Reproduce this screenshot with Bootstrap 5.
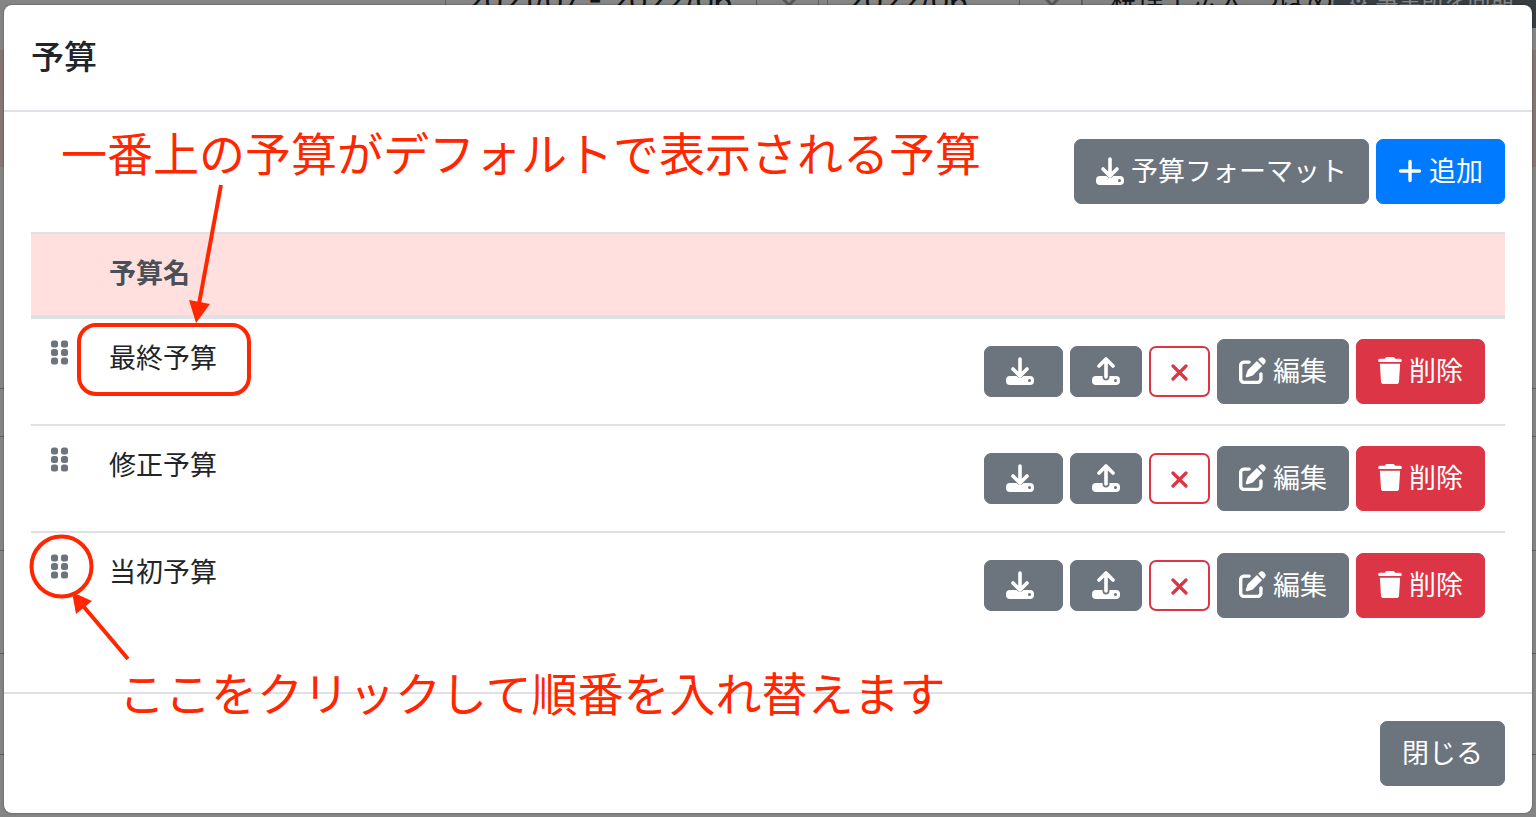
<!DOCTYPE html>
<html lang="ja">
<head>
<meta charset="utf-8">
<meta name="viewport" content="width=device-width, initial-scale=1">
<title>予算</title>
<link href="https://cdn.jsdelivr.net/npm/bootstrap@5.3.0/dist/css/bootstrap.min.css" rel="stylesheet">
<style>
  body { font-family: "Noto Sans CJK JP", sans-serif; font-size: 27px; line-height: 41px; color: #212529; background: #fff; }
  .stage { min-height: 100vh; padding: 5px 4px 4px; }

  /* page under the dialog */
  .underlay { inset: 0; line-height: 40px; }
  .underlay::after { content: ""; position: absolute; inset: 0; background: rgba(0,0,0,.48); }
  .filter-bar { height: 50px; padding-left: 445px; }
  .filter-bar > div { height: 10px; border: solid #bbb; border-width: 0 1px 1px; }
  .filter-text { margin-top: -19px; white-space: nowrap; font-family: Inter, "Noto Sans CJK JP", sans-serif; font-size: 30px; }
  .period { width: 374px; padding-left: 20px; }
  .month { width: 255px; padding-left: 18px; margin-left: 8px; }
  .office { width: 252px; padding-left: 27px; background: #f5f7f6; }
  .office .filter-text { font-size: 27px; }
  .filter-bar > .sync { height: 28px; background: #6c757d; border: 0; color: #fff; padding-left: 14px; }
  .sync .filter-text { font-size: 23px; }
  .chev { width: 62px; border-left: 1px solid #aaa; padding-left: 20px; }
  .band-pink { height: 117px; background: #ffe0de; }
  .line-row { border-bottom: 1px solid #b4b8bb; }

  /* dialog */
  .budget-dialog { background: #fff; border-radius: 8px; border: 0; box-shadow: 0 0 2px rgba(0,0,0,.5); }
  .budget-dialog .modal-header { padding: 25px 27px 29px; border-bottom: 2px solid #dee2e6; }
  .budget-dialog .modal-title { font-size: 33px; line-height: 51px; font-weight: 500; }
  .budget-dialog .modal-body { padding: 27px; }
  .budget-dialog .modal-footer { padding: 27px; border-top: 2px solid #dee2e6; }
  .budget-dialog .modal-footer > * { margin: 0; }
  .toolbar { gap: 7px; margin-bottom: 28px; }

  .act { --bs-btn-font-size: 27px; --bs-btn-line-height: 41px; --bs-btn-border-radius: 7px;
         padding: 9px 21px 13px;
         display: inline-flex; align-items: center; gap: 7px; white-space: nowrap; }
  .act.btn-secondary { --bs-btn-bg: #6c757d; }
  .act.btn-primary { --bs-btn-bg: #007bff; --bs-btn-border-color: #007bff; }
  .act svg, .grip svg { display: block; fill: currentColor; flex: none; }
  .act svg { margin-top: 2px; }
  .act-icon { height: 51px; }
  .act-wide { padding-right: 28px; }
  .act-clear { background: #fff; border-width: 2px; padding: 0 20px; }

  .budget-table { border-collapse: separate; border-spacing: 0; margin-bottom: 27px; }
  .budget-table > :not(caption) > * > * { padding: 20px; border: 0; }
  .budget-table > thead > tr > th { background: #ffe0de; color: #495057; border-top: 2px solid #dee2e6; border-bottom: 4px solid #dee2e6; }
  .budget-table > tbody > tr + tr > td { border-top: 2px solid #dee2e6; }
  .budget-table > tbody > tr > .name-cell { color: #212529; }
  .budget-table > thead > tr > th, .budget-table > tbody > tr > .name-cell { padding: 17px 20px 23px; }
  .grip-col { width: 58px; }
  .grip { border: 0; background: none; padding: 0; color: #6c757d; display: block; }
  .row-actions { gap: 7px; }

  /* red notes over the dialog */
  .notes { inset: 0; pointer-events: none; color: #ff2600; }
  .note { font-size: 46px; line-height: 60px; white-space: nowrap; }
  .note-top { left: 61px; top: 121px; }
  .note-bottom { left: 119px; top: 661px; }
</style>
</head>
<body>
<svg class="d-none" aria-hidden="true">
  <symbol id="i-down" viewBox="0 0 28 28"><path d="M4 19h6.500q3.500 4 7 0H24a4 4 0 0 1 4 4v1a4 4 0 0 1-4 4H4a4 4 0 0 1-4-4v-1a4 4 0 0 1 4-4zM23.500 22a1.500 1.500 0 1 0 0 3 1.500 1.500 0 0 0 0-3z" fill-rule="evenodd"/><path d="M14 2v16M7 12l7 7 7-7" fill="none" stroke="currentColor" stroke-width="3.600" stroke-linecap="round" stroke-linejoin="round"/></symbol>
  <symbol id="i-up" viewBox="0 0 28 28"><path d="M4 19h6.500v1a3.500 3.500 0 0 0 7 0v-1H24a4 4 0 0 1 4 4v1a4 4 0 0 1-4 4H4a4 4 0 0 1-4-4v-1a4 4 0 0 1 4-4zM23.500 22a1.500 1.500 0 1 0 0 3 1.500 1.500 0 0 0 0-3z" fill-rule="evenodd"/><path d="M14 20V3M7 9l7-7 7 7" fill="none" stroke="currentColor" stroke-width="3.600" stroke-linecap="round" stroke-linejoin="round"/></symbol>
  <symbol id="i-x" viewBox="0 0 17 17"><path d="M2 2l13 13M15 2L2 15" stroke="currentColor" stroke-width="3.200" stroke-linecap="round"/></symbol>
  <symbol id="i-plus" viewBox="0 0 24 24"><path d="M12 2.500v19M2.500 12h19" stroke="currentColor" stroke-width="3.400" stroke-linecap="round"/></symbol>
  <symbol id="i-edit" viewBox="0 0 512 512"><path d="M471.6 21.7c-21.9-21.9-57.3-21.9-79.2 0L362.3 51.7l97.9 97.9 30.1-30.1c21.9-21.9 21.9-57.3 0-79.2L471.6 21.7zm-299.2 220c-6.1 6.1-10.8 13.6-13.5 21.9l-29.6 88.8c-2.9 8.6-.6 18.1 5.8 24.6s15.9 8.7 24.6 5.8l88.8-29.6c8.2-2.7 15.7-7.4 21.9-13.5L437.7 172.3 339.7 74.3 172.4 241.7zM96 64C43 64 0 107 0 160V416c0 53 43 96 96 96H352c53 0 96-43 96-96V320c0-17.7-14.3-32-32-32s-32 14.3-32 32v96c0 17.7-14.3 32-32 32H96c-17.7 0-32-14.3-32-32V160c0-17.7 14.3-32 32-32h96c17.7 0 32-14.3 32-32s-14.3-32-32-32H96z"/></symbol>
  <symbol id="i-trash" viewBox="0 0 448 512"><path d="M135.2 17.7L128 32H32C14.3 32 0 46.3 0 64S14.3 96 32 96H416c17.7 0 32-14.3 32-32s-14.3-32-32-32H320l-7.2-14.3C307.4 6.800 296.3 0 284.2 0H163.8c-12.1 0-23.2 6.800-28.6 17.7zM416 128H32L53.2 467c1.600 25.3 22.6 45 47.9 45H346.9c25.3 0 46.3-19.7 47.9-45L416 128z"/></symbol>
  <symbol id="i-grip" viewBox="0 0 17 27"><rect y="1.500" width="7" height="7" rx="2.500"/><rect x="10" y="1.500" width="7" height="7" rx="2.500"/><rect y="10" width="7" height="7" rx="2.500"/><rect x="10" y="10" width="7" height="7" rx="2.500"/><rect y="18.500" width="7" height="7" rx="2.500"/><rect x="10" y="18.500" width="7" height="7" rx="2.500"/></symbol>
</svg>

<div class="stage position-relative overflow-hidden">
  <div class="underlay position-absolute overflow-hidden d-flex flex-column" aria-hidden="true">
    <div class="filter-bar d-flex align-items-start flex-shrink-0">
      <div class="period d-flex justify-content-between flex-shrink-0"><span class="filter-text">2021/07 - 2022/06</span>
        <span class="chev"><svg class="d-block" width="24" height="8" viewBox="0 0 24 8"><path d="M3 -4l9 9 9-9" fill="none" stroke="#aaa" stroke-width="3"/></svg></span></div>
      <div class="month d-flex justify-content-between flex-shrink-0"><span class="filter-text">2022/06</span>
        <span class="chev"><svg class="d-block" width="24" height="8" viewBox="0 0 24 8"><path d="M3 -4l9 9 9-9" fill="none" stroke="#aaa" stroke-width="3"/></svg></span></div>
      <div class="office flex-shrink-0"><div class="filter-text">税理士法人 つばめ</div></div>
      <div class="sync flex-grow-1"><div class="filter-text">⚙ 事業所を同期</div></div>
    </div>
    <div class="band-pink flex-shrink-0"></div>
    <div class="line-row flex-shrink-0" style="height:222px"></div>
    <div class="line-row flex-shrink-0" style="height:48px"></div>
    <div class="line-row flex-shrink-0" style="height:114px"></div>
    <div class="line-row flex-shrink-0" style="height:103px"></div>
    <div class="line-row flex-shrink-0" style="height:101px"></div>
  </div>

  <div class="modal-content budget-dialog" role="dialog" aria-labelledby="dlg-title">
    <div class="modal-header"><h5 class="modal-title" id="dlg-title">予算</h5></div>
    <div class="modal-body">
      <div class="toolbar d-flex justify-content-end">
        <button type="button" class="btn btn-secondary act"><svg width="28" height="28"><use href="#i-down"/></svg>予算フォーマット</button>
        <button type="button" class="btn btn-primary act"><svg width="24" height="24"><use href="#i-plus"/></svg>追加</button>
      </div>
      <table class="table budget-table">
        <thead><tr><th class="grip-col"></th><th>予算名</th><th></th></tr></thead>
        <tbody>
          <tr>
            <td><button type="button" class="grip" aria-label="並べ替え"><svg width="17" height="27"><use href="#i-grip"/></svg></button></td>
            <td class="name-cell">最終予算</td>
            <td><div class="row-actions d-flex justify-content-end align-items-center">
              <button type="button" class="btn btn-secondary act act-icon act-wide" aria-label="ダウンロード"><svg width="28" height="28"><use href="#i-down"/></svg></button>
              <button type="button" class="btn btn-secondary act act-icon" aria-label="アップロード"><svg width="28" height="28"><use href="#i-up"/></svg></button>
              <button type="button" class="btn btn-outline-danger act act-icon act-clear" aria-label="クリア"><svg width="17" height="17"><use href="#i-x"/></svg></button>
              <button type="button" class="btn btn-secondary act"><svg width="27" height="27"><use href="#i-edit"/></svg>編集</button>
              <button type="button" class="btn btn-danger act"><svg width="24" height="27"><use href="#i-trash"/></svg>削除</button>
            </div></td>
          </tr>
          <tr>
            <td><button type="button" class="grip" aria-label="並べ替え"><svg width="17" height="27"><use href="#i-grip"/></svg></button></td>
            <td class="name-cell">修正予算</td>
            <td><div class="row-actions d-flex justify-content-end align-items-center">
              <button type="button" class="btn btn-secondary act act-icon act-wide" aria-label="ダウンロード"><svg width="28" height="28"><use href="#i-down"/></svg></button>
              <button type="button" class="btn btn-secondary act act-icon" aria-label="アップロード"><svg width="28" height="28"><use href="#i-up"/></svg></button>
              <button type="button" class="btn btn-outline-danger act act-icon act-clear" aria-label="クリア"><svg width="17" height="17"><use href="#i-x"/></svg></button>
              <button type="button" class="btn btn-secondary act"><svg width="27" height="27"><use href="#i-edit"/></svg>編集</button>
              <button type="button" class="btn btn-danger act"><svg width="24" height="27"><use href="#i-trash"/></svg>削除</button>
            </div></td>
          </tr>
          <tr>
            <td><button type="button" class="grip" aria-label="並べ替え"><svg width="17" height="27"><use href="#i-grip"/></svg></button></td>
            <td class="name-cell">当初予算</td>
            <td><div class="row-actions d-flex justify-content-end align-items-center">
              <button type="button" class="btn btn-secondary act act-icon act-wide" aria-label="ダウンロード"><svg width="28" height="28"><use href="#i-down"/></svg></button>
              <button type="button" class="btn btn-secondary act act-icon" aria-label="アップロード"><svg width="28" height="28"><use href="#i-up"/></svg></button>
              <button type="button" class="btn btn-outline-danger act act-icon act-clear" aria-label="クリア"><svg width="17" height="17"><use href="#i-x"/></svg></button>
              <button type="button" class="btn btn-secondary act"><svg width="27" height="27"><use href="#i-edit"/></svg>編集</button>
              <button type="button" class="btn btn-danger act"><svg width="24" height="27"><use href="#i-trash"/></svg>削除</button>
            </div></td>
          </tr>
        </tbody>
      </table>
    </div>
    <div class="modal-footer"><button type="button" class="btn btn-secondary act">閉じる</button></div>
  </div>

  <div class="notes position-absolute">
    <svg class="d-block" width="300" height="700" fill="none" stroke="#ff2600" stroke-width="4">
      <rect x="79" y="325" width="170" height="69" rx="17"/>
      <path d="M221 185L199 304"/>
      <path d="M196 323l-7-23 21 4z" fill="#ff2600" stroke="none"/>
      <circle cx="61.500" cy="566.500" r="30"/>
      <path d="M128 659L84 607"/>
      <path d="M72 592l4 22 16-13z" fill="#ff2600" stroke="none"/>
    </svg>
    <div class="note note-top position-absolute">一番上の予算がデフォルトで表示される予算</div>
    <div class="note note-bottom position-absolute">ここをクリックして順番を入れ替えます</div>
  </div>
</div>
<script src="https://cdn.jsdelivr.net/npm/bootstrap@5.3.0/dist/js/bootstrap.bundle.min.js"></script>
</body>
</html>
